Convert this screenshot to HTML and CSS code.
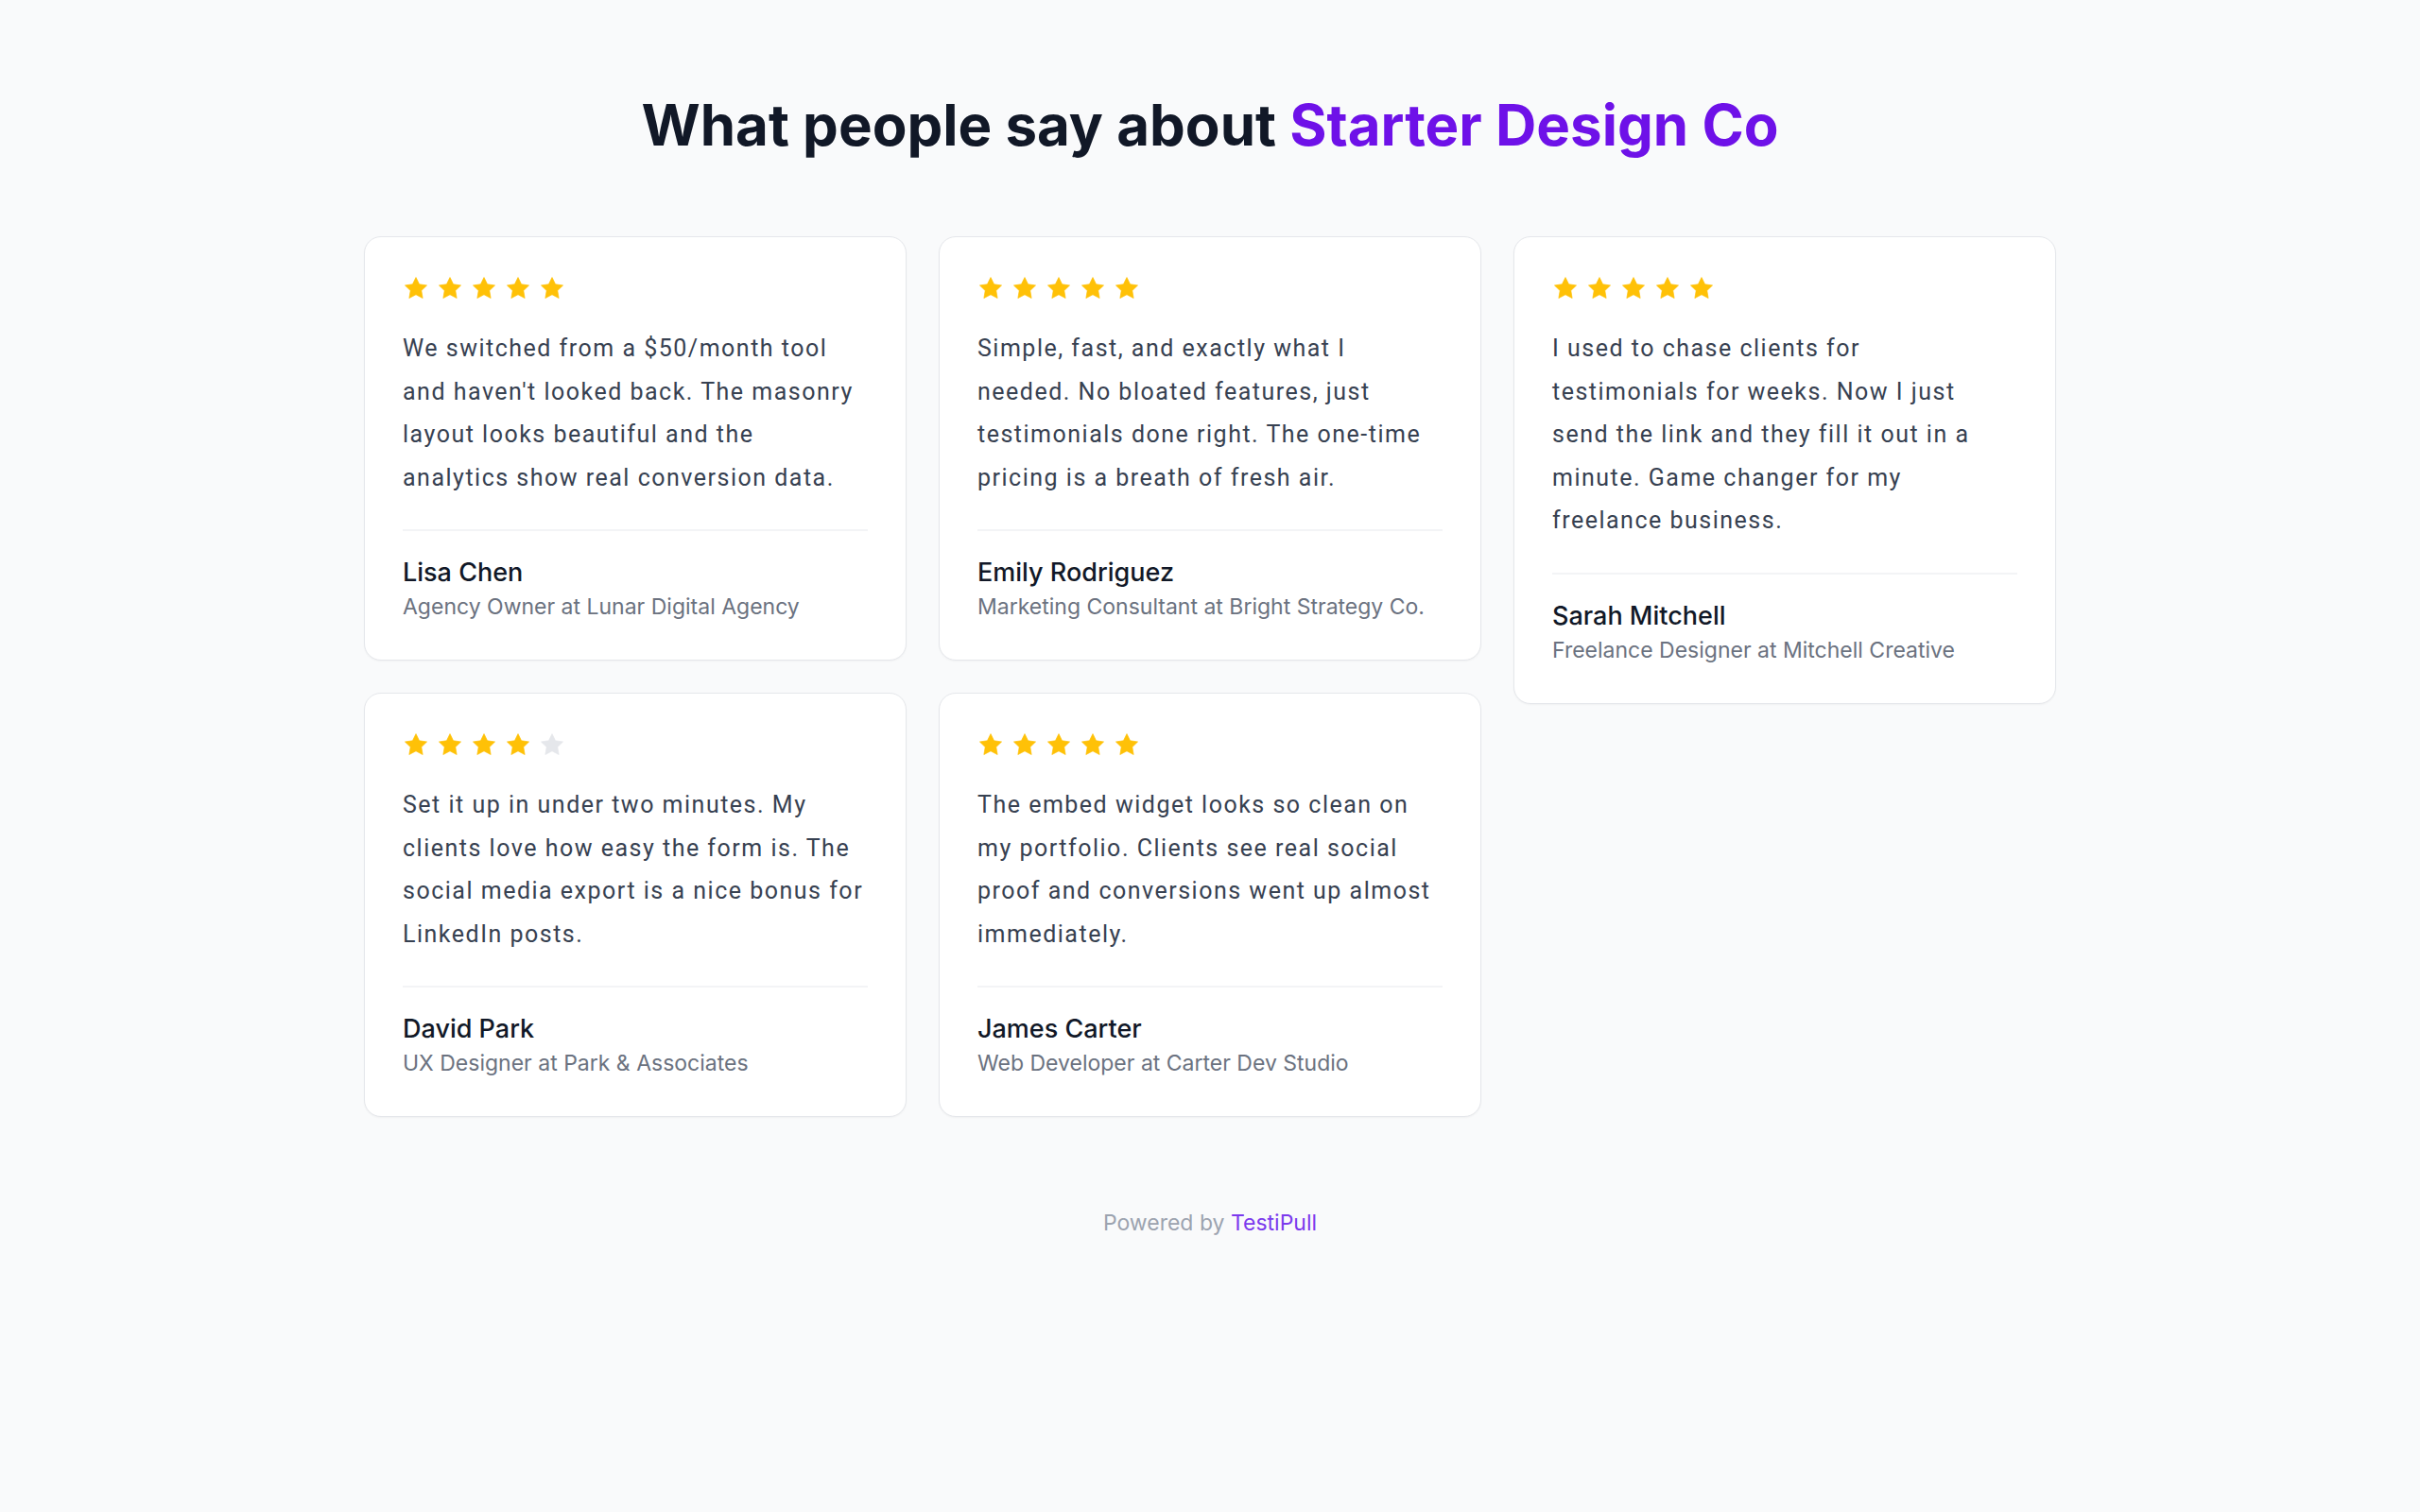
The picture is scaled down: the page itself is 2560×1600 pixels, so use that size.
FILE: index.html
```html
<!DOCTYPE html>
<html lang="en">
  <head>
    <meta charset="UTF-8" />
    <meta name="viewport" content="width=device-width, initial-scale=1.0" />
    <title>Wall of Love - Starter Design Co</title>
    <link rel="stylesheet" href="styles.css">
  </head>
  <body>
    <div class="page">
      <h1 class="title">What people say about <span class="brand">Starter Design Co</span></h1>

      <div class="wall">
        <div class="wall-col">
          <div class="card">
            <div class="stars" data-rating="5"></div>
            <p class="quote">We switched from a $50/month tool and haven't looked back. The masonry layout looks beautiful and the analytics show real conversion data.</p>
            <div class="author">
              <div class="author-name">Lisa Chen</div>
              <div class="author-role">Agency Owner at Lunar Digital Agency</div>
            </div>
          </div>
          <div class="card">
            <div class="stars" data-rating="4"></div>
            <p class="quote">Set it up in under two minutes. My clients love how easy the form is. The social media export is a nice bonus for LinkedIn posts.</p>
            <div class="author">
              <div class="author-name">David Park</div>
              <div class="author-role">UX Designer at Park &amp; Associates</div>
            </div>
          </div>
        </div>

        <div class="wall-col">
          <div class="card">
            <div class="stars" data-rating="5"></div>
            <p class="quote">Simple, fast, and exactly what I needed. No bloated features, just testimonials done right. The one-time pricing is a breath of fresh air.</p>
            <div class="author">
              <div class="author-name">Emily Rodriguez</div>
              <div class="author-role">Marketing Consultant at Bright Strategy Co.</div>
            </div>
          </div>
          <div class="card">
            <div class="stars" data-rating="5"></div>
            <p class="quote">The embed widget looks so clean on my portfolio. Clients see real social proof and conversions went up almost immediately.</p>
            <div class="author">
              <div class="author-name">James Carter</div>
              <div class="author-role">Web Developer at Carter Dev Studio</div>
            </div>
          </div>
        </div>

        <div class="wall-col">
          <div class="card">
            <div class="stars" data-rating="5"></div>
            <p class="quote">I used to chase clients for testimonials for weeks. Now I just send the link and they fill it out in a minute. Game changer for my freelance business.</p>
            <div class="author">
              <div class="author-name">Sarah Mitchell</div>
              <div class="author-role">Freelance Designer at Mitchell Creative</div>
            </div>
          </div>
        </div>
      </div>

      <p class="powered">Powered by <a href="#" class="powered-link">TestiPull</a></p>
    </div>

    <script>
      const starPath =
        "M12 2.2l3.05 6.2 6.85 1-4.95 4.82 1.17 6.8L12 17.8l-6.12 3.22 1.17-6.8L2.1 9.4l6.85-1L12 2.2z";

      document.querySelectorAll(".stars").forEach(function (box) {
        const rating = parseInt(box.dataset.rating, 10);
        let html = "";
        for (let i = 1; i <= 5; i++) {
          const cls = i <= rating ? "star" : "star star-empty";
          html +=
            '<svg class="' + cls + '" viewBox="0 0 24 24"><path d="' +
            starPath + '" stroke-linejoin="round" /></svg>';
        }
        box.innerHTML = html;
      });
    </script>
  </body>
</html>
```

FILE: styles.css
```css
body {
  font-family: Inter, "Noto Sans", sans-serif;
  background-color: #f9fafb;
  color: #111827;
  margin: 0;
}
.page {
  padding: 96px 20px 80px;
}
.title {
  text-align: center;
  font-size: 60px;
  font-weight: 700;
  line-height: 1.2;
  letter-spacing: 0;
  color: #111827;
  margin: 0 0 82px;
}
.brand {
  color: #6e11e8;
}
.wall {
  display: flex;
  gap: 34px;
  max-width: 1790px;
  margin: 0 auto;
  align-items: flex-start;
}
.wall-col {
  flex: 1;
  display: flex;
  flex-direction: column;
  gap: 34px;
  min-width: 0;
}
.card {
  background: #fff;
  border: 1px solid #e5e7eb;
  border-radius: 18px;
  padding: 40px;
  box-shadow: 0 1px 2px rgba(0, 0, 0, 0.04);
}
.stars {
  display: flex;
  gap: 8px;
  height: 28px;
  margin-bottom: 27px;
}
.star {
  width: 28px;
  height: 28px;
  fill: #ffc107;
  stroke: #ffc107;
  stroke-width: 0.6;
}
.star-empty {
  fill: #e5e7eb;
  stroke: #e5e7eb;
}
.quote {
  margin: 0;
  max-width: 488px;
  font-family: Roboto, Inter, sans-serif;
  font-size: 25px;
  letter-spacing: 1.5px;
  line-height: 45.5px;
  color: #374151;
}
.author {
  margin-top: 32px;
  padding-top: 26px;
  border-top: 2px solid #f3f4f6;
}
.author-name {
  font-size: 27px;
  font-weight: 500;
  line-height: 36px;
  color: #111827;
}
.author-role {
  margin-top: 2px;
  font-size: 23px;
  line-height: 32px;
  color: #6b7280;
}
.powered {
  text-align: center;
  margin: 96px 0 0;
  font-size: 23px;
  line-height: 33px;
  color: #9ca3af;
}
.powered-link {
  color: #7c3aed;
  text-decoration: none;
}
```
